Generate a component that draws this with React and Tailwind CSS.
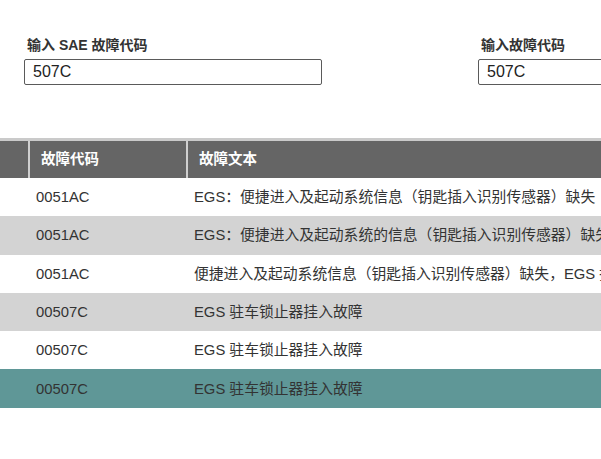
const rows = [
  { code: '0051AC', text: 'EGS：便捷进入及起动系统信息（钥匙插入识别传感器）缺失', bg: 'bg-white' },
  { code: '0051AC', text: 'EGS：便捷进入及起动系统的信息（钥匙插入识别传感器）缺失', bg: 'bg-[#d3d3d3]' },
  { code: '0051AC', text: '便捷进入及起动系统信息（钥匙插入识别传感器）缺失，EGS 接收', bg: 'bg-white' },
  { code: '00507C', text: 'EGS 驻车锁止器挂入故障', bg: 'bg-[#d3d3d3]' },
  { code: '00507C', text: 'EGS 驻车锁止器挂入故障', bg: 'bg-white' },
  { code: '00507C', text: 'EGS 驻车锁止器挂入故障', bg: 'bg-[#5f9797]' },
]

function Field({ label, value, width }) {
  return (
    <div className={`flex shrink-0 flex-col ${width}`}>
      <label className="whitespace-nowrap pl-[3px] text-[14px] font-bold leading-[20px] text-[#333]">{label}</label>
      <input
        readOnly
        value={value}
        className="mt-[4px] h-[26px] w-full rounded-[2px] border border-[#5a5a5a] bg-white px-[8px] text-[16px] text-[#222] outline-none"
      />
    </div>
  )
}

export default function App() {
  return (
    <div
      className="h-[459px] w-[601px] overflow-hidden bg-white"
      style={{ fontFamily: '"Liberation Sans", "Noto Sans CJK SC", sans-serif' }}
    >
      <div className="flex gap-[156px] pl-[24px] pt-[35px]">
        <Field label="输入 SAE 故障代码" value="507C" width="w-[298px]" />
        <Field label="输入故障代码" value="507C" width="w-[300px]" />
      </div>

      <table className="mt-[53px] w-[820px] border-collapse border-t-[3px] border-[#cacaca] text-left">
        <thead>
          <tr className="h-[38.5px] bg-[#656565] text-[14.5px] font-bold text-white">
            <th className="w-[29px] border-r-2 border-[#cfcfcf] p-0"></th>
            <th className="w-[158px] border-r-2 border-[#cfcfcf] pl-[11px] font-bold">故障代码</th>
            <th className="pl-[11px] font-bold">故障文本</th>
          </tr>
        </thead>
        <tbody>
          {rows.map((r, i) => (
            <tr key={i} className={`h-[38.3px] ${r.bg} whitespace-nowrap text-[14.8px] text-[#333]`}>
              <td className="p-0"></td>
              <td className="pl-[7px]">{r.code}</td>
              <td className="pl-[7px]">{r.text}</td>
            </tr>
          ))}
        </tbody>
      </table>
    </div>
  )
}
